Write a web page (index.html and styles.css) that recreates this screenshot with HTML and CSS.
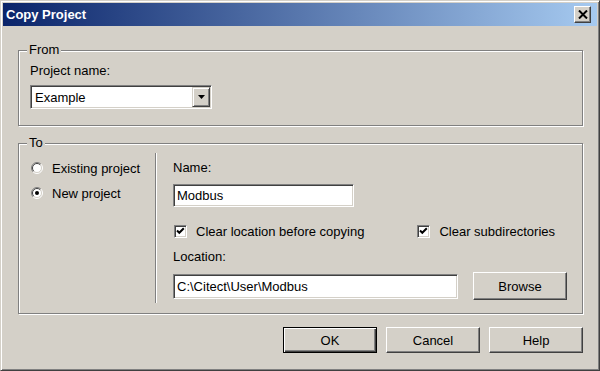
FILE: index.html
```html
<!DOCTYPE html>
<html lang="en">
<head>
    <meta charset="UTF-8">
    <meta name="viewport" content="width=device-width, initial-scale=1.0">
    <title>Copy Project</title>
    <link rel="stylesheet" href="styles.css">
</head>
<body>
    <div class="window">
        <div class="titlebar">
            <span class="title">Copy Project</span>
            <span class="close-btn">
                <svg width="10" height="9" viewBox="0 0 10 9"><path d="M1 0.5 L9 8.5 M9 0.5 L1 8.5" stroke="#000" stroke-width="2" fill="none"/></svg>
            </span>
        </div>

        <div class="group group-from">
            <div class="group-title">From</div>
            <div class="from-body">
                <div class="field-label">Project name:</div>
                <div class="combo">
                    <span class="combo-text">Example</span>
                    <span class="combo-arrow">
                        <svg width="7" height="4" viewBox="0 0 7 4"><path d="M0 0 H7 L3.5 4 Z" fill="#000"/></svg>
                    </span>
                </div>
            </div>
        </div>

        <div class="group group-to">
            <div class="group-title">To</div>
            <div class="to-body">
                <div class="to-options">
                    <label class="radio-row">
                        <svg class="radio" width="12" height="12" viewBox="0 0 12 12">
                            <circle cx="6" cy="6" r="5" fill="#fff"/>
                            <path d="M2.1 9.9 A5.5 5.5 0 0 1 9.9 2.1" stroke="#808080" fill="none"/>
                            <path d="M9.9 2.1 A5.5 5.5 0 0 1 2.1 9.9" stroke="#fff" fill="none"/>
                            <path d="M2.8 9.2 A4.5 4.5 0 0 1 9.2 2.8" stroke="#404040" fill="none"/>
                            <path d="M9.2 2.8 A4.5 4.5 0 0 1 2.8 9.2" stroke="#d4d0c8" fill="none"/>
                        </svg>
                        Existing project
                    </label>
                    <label class="radio-row">
                        <svg class="radio" width="12" height="12" viewBox="0 0 12 12">
                            <circle cx="6" cy="6" r="5" fill="#fff"/>
                            <path d="M2.1 9.9 A5.5 5.5 0 0 1 9.9 2.1" stroke="#808080" fill="none"/>
                            <path d="M9.9 2.1 A5.5 5.5 0 0 1 2.1 9.9" stroke="#fff" fill="none"/>
                            <path d="M2.8 9.2 A4.5 4.5 0 0 1 9.2 2.8" stroke="#404040" fill="none"/>
                            <path d="M9.2 2.8 A4.5 4.5 0 0 1 2.8 9.2" stroke="#d4d0c8" fill="none"/>
                            <circle cx="6" cy="6" r="2" fill="#000"/>
                        </svg>
                        New project
                    </label>
                </div>

                <div class="to-details">
                    <div class="field-label">Name:</div>
                    <input type="text" class="text-field name-field" value="Modbus">

                    <div class="check-row">
                        <span class="check-item">
                            <span class="checkbox"><svg width="11" height="11" viewBox="0 0 11 11"><path d="M2 4.5 L4.3 6.8 L8.8 2.3" stroke="#000" stroke-width="2" fill="none"/></svg></span>
                            Clear location before copying
                        </span>
                        <span class="check-item">
                            <span class="checkbox"><svg width="11" height="11" viewBox="0 0 11 11"><path d="M2 4.5 L4.3 6.8 L8.8 2.3" stroke="#000" stroke-width="2" fill="none"/></svg></span>
                            Clear subdirectories
                        </span>
                    </div>

                    <div class="field-label location-label">Location:</div>
                    <div class="location-row">
                        <input type="text" class="text-field location-field" value="C:\Citect\User\Modbus">
                        <button type="button" class="btn browse-btn">Browse</button>
                    </div>
                </div>
            </div>
        </div>

        <div class="dialog-buttons">
            <button type="button" class="btn btn-default">OK</button>
            <button type="button" class="btn">Cancel</button>
            <button type="button" class="btn">Help</button>
        </div>
    </div>
</body>
</html>
```

FILE: styles.css
```css
body {
    margin: 0;
    font-family: "Liberation Sans", Arial, sans-serif;
    font-size: 13px;
    color: #000;
    background-color: #d4d0c8;
}
.window {
    width: 600px;
    height: 371px;
    box-sizing: border-box;
    padding: 2px;
    background-color: #d4d0c8; /* classic dialog face */
    border: 1px solid;
    border-color: #d4d0c8 #404040 #404040 #d4d0c8;
    box-shadow: inset 1px 1px #fff, inset -1px -1px #808080;
}
.titlebar {
    height: 23px;
    display: flex;
    align-items: center;
    justify-content: space-between;
    padding: 0 6px 0 3px;
    background: linear-gradient(to right, #0a246a, #a6caf0);
}
.title {
    color: #fff;
    font-weight: bold;
    font-size: 13px;
}
.close-btn {
    width: 17px;
    height: 17px;
    box-sizing: border-box;
    display: flex;
    align-items: center;
    justify-content: center;
    background-color: #d4d0c8;
    border: 1px solid;
    border-color: #fff #404040 #404040 #fff;
    box-shadow: inset -1px -1px #808080;
}

/* etched group boxes */
.group {
    margin: 0 14px 0 15px;
    border: 1px solid #808080;
    box-shadow: inset 1px 1px #fff, 1px 1px #fff;
}
.group-from {
    margin-top: 24px;
}
.group-to {
    margin-top: 17px;
}
.group-title {
    width: fit-content;
    margin: -9px 0 0 8px;
    padding: 0 2px;
    line-height: 16px;
    background-color: #d4d0c8;
}
.field-label {
    line-height: 16px;
}
.from-body {
    padding: 5px 0 16px 11px;
}
.combo {
    width: 182px;
    height: 24px;
    box-sizing: border-box;
    margin-top: 6px;
    padding: 1px;
    display: flex;
    align-items: center;
    background-color: #fff;
    border: 1px solid;
    border-color: #808080 #fff #fff #808080;
    box-shadow: inset 1px 1px #404040, inset -1px -1px #d4d0c8;
}
.combo-text {
    flex: 1;
    padding-left: 3px;
}
.combo-arrow {
    width: 18px;
    height: 20px;
    box-sizing: border-box;
    display: flex;
    align-items: center;
    justify-content: center;
    background-color: #d4d0c8;
    border: 1px solid;
    border-color: #d4d0c8 #404040 #404040 #d4d0c8;
    box-shadow: inset 1px 1px #fff, inset -1px -1px #808080;
}

.to-body {
    display: flex;
    margin-top: 2px;
    padding-bottom: 10px;
}
.to-options {
    width: 136px;
    padding: 5px 0 0 12px;
    box-sizing: border-box;
    display: flex;
    flex-direction: column;
    gap: 5px;
}
.radio-row {
    height: 20px;
    display: flex;
    align-items: center;
    gap: 9px;
}
.to-details {
    flex: 1;
    padding: 7px 0 3px 17px;
    border-left: 1px solid #808080;
    box-shadow: inset 1px 0 #fff;
}
.text-field {
    display: block;
    box-sizing: border-box;
    margin: 0;
    padding: 0 0 0 3px;
    font-family: inherit;
    font-size: 13px;
    color: #000;
    background-color: #fff;
    border: 1px solid;
    border-color: #808080 #fff #fff #808080;
    box-shadow: inset 1px 1px #404040, inset -1px -1px #d4d0c8;
    outline: none;
}
.name-field {
    width: 181px;
    height: 23px;
    margin-top: 8px;
}
.check-row {
    display: flex;
    align-items: center;
    gap: 53px;
    height: 16px;
    margin-top: 16px;
    padding-left: 1px;
}
.check-item {
    display: flex;
    align-items: center;
    gap: 9px;
}
.checkbox {
    width: 13px;
    height: 13px;
    box-sizing: border-box;
    display: flex;
    background-color: #fff;
    border: 1px solid;
    border-color: #808080 #fff #fff #808080;
    box-shadow: inset 1px 1px #404040, inset -1px -1px #d4d0c8;
}
.location-label {
    margin-top: 10px;
}
.location-row {
    display: flex;
    align-items: center;
    gap: 15px;
    height: 28px;
    margin-top: 7px;
}
.location-field {
    width: 285px;
    height: 25px;
}

.btn {
    width: 94px;
    height: 26px;
    padding: 0;
    font-family: inherit;
    font-size: 13px;
    color: #000;
    background-color: #d4d0c8;
    border: 1px solid;
    border-color: #fff #404040 #404040 #fff;
    box-shadow: inset -1px -1px #808080;
}
.btn-default {
    border-color: #000;
    box-shadow: inset 1px 1px #fff, inset -1px -1px #404040, inset -2px -2px #808080;
}
.browse-btn {
    height: 28px;
}
.dialog-buttons {
    display: flex;
    justify-content: flex-end;
    gap: 9px;
    margin: 13px 14px 0 0;
}
```
